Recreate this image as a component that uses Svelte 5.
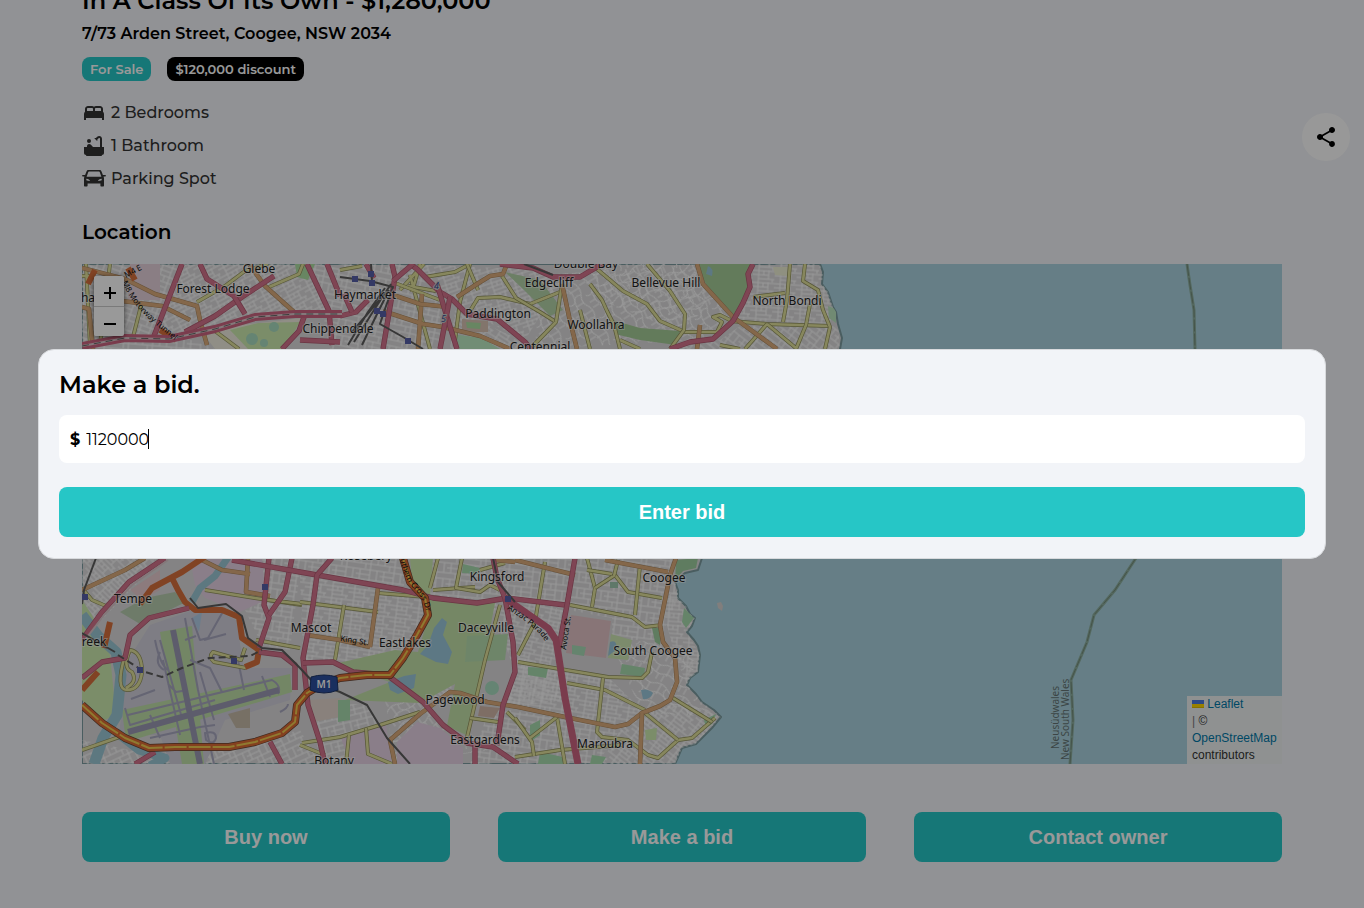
<script>
  import { onMount } from 'svelte';

  let bid = $state('1120000');
  let bidInput;

  onMount(() => bidInput.focus());

  const land =
    'M82 264H820L823 272 822 284 828 292 833 307 836 312 838 324 842 338 840 349 830 400 790 430 770 480 730 520 702 558 698 570 685 573 675 582 678 590 678 598 686 606 690 614 695 618 692 626 687 632 694 640 698 646 700 655 698 672 690 678 687 685 696 694 702 702 714 710 721 717 712 728 705 735 696 744 682 748 675 764H82Z';

  // Street grids: an area, the angle of its blocks and the pattern used
  const districts = [
    ['82,264 182,264 154,334 82,346', 20, 'blocks'],
    ['182,264 307,264 329,311 245,316 180,334 160,330', -28, 'tight'],
    ['82,349 125,338 180,336 215,349', 5, 'blocks'],
    ['310,264 410,264 440,300 440,349 330,349', 12, 'blocks'],
    ['410,264 540,270 560,284 525,340 467,312', -18, 'tight'],
    ['455,310 525,342 530,349 450,349', 33, 'tight'],
    ['540,275 700,264 705,290 735,320 700,340 535,349', 58, 'loose'],
    ['590,264 690,264 715,300 680,332 600,300', -24, 'loose'],
    ['753,264 820,264 833,307 830,326 735,322', 4, 'tight'],
    ['740,326 838,326 840,349 670,349 720,340', 38, 'blocks'],
    ['82,558 162,558 82,640', 45, 'tight'],
    ['230,558 404,558 404,590 300,572 290,650 262,645 245,610', 8, 'blocks'],
    ['300,575 425,598 428,615 395,672 303,660', 7, 'tight'],
    ['430,558 575,558 567,603 430,597', 6, 'blocks'],
    ['490,603 567,605 558,652 565,700 505,708 515,672', 12, 'tight'],
    ['575,558 675,558 678,598 660,640 612,640 612,618 568,610', 7, 'blocks'],
    ['518,657 608,677 645,713 622,727 500,705', 9, 'tight'],
    ['610,640 663,642 700,655 687,685 702,702 721,717 642,713', 30, 'loose'],
    ['490,707 622,727 597,764 470,764', 8, 'blocks'],
    ['622,727 680,700 721,717 676,764 600,764', 38, 'tight'],
    ['310,700 367,705 387,738 400,764 320,764', -14, 'blocks'],
    ['82,740 140,752 210,752 300,730 320,764 82,764', -25, 'blocks'],
    ['385,700 423,702 467,743 490,750 395,764', -36, 'loose'],
    ['440,680 453,680 450,695 430,707', 40, 'tight'],
    ['660,600 678,590 695,618 687,632 700,655 698,672 687,685 675,655', 4, 'tight']
  ];

  const areas = [
    ['#f0eddf', '205,336 240,325 302,318 285,349 215,349'],
    ['#cdebb0', '230,330 258,323 300,322 284,349 248,349'],
    ['#aedfa3', '295,264 315,264 308,280 297,277'],
    ['#e6d3dc', '130,264 160,264 160,300 128,300'],
    ['#b4d4a8', '505,272 540,280 563,310 550,316 524,290'],
    ['#bcecc4', '452,334 482,338 500,349 455,349'],
    ['#d9c3b5', '462,319 488,321 488,332 462,332'],
    ['#aedfa3', '466,322 481,323 480,329 467,328'],
    ['#a6cd98', '698,264 752,264 747,280 748,292 733,317 713,297 702,277'],
    ['#a6cd98', '612,320 640,328 680,331 676,345 640,340 615,334'],
    ['#eef0d5', '773,267 790,267 788,276 775,275'],
    ['#bce6c0', '828,306 836,309 836,323 829,318'],
    ['#e6d3e4', '190,558 262,558 266,600 240,612 205,598 195,585'],
    ['#e9cdd0', '130,590 160,570 160,590 142,600'],
    ['#cdebb0', '82,600 92,615 110,655 116,715 100,722 82,700'],
    ['#b8cdb0', '120,612 145,598 175,592 186,602 140,624'],
    ['#d2d0dc', '128,660 150,625 205,606 236,620 244,668 292,668 290,700 225,720 205,764 170,764 160,735 119,735'],
    ['#c0e0a8', '160,632 192,626 204,764 182,764'],
    ['#c0e0a8', '122,710 290,674 292,692 126,742'],
    ['#b3cfe8', '192,618 202,612 199,632'],
    ['#c7bba9', '228,714 250,708 250,728 236,728'],
    ['#e4d8cf', '310,700 340,698 344,716 314,722'],
    ['#cdebb0', '410,558 433,558 430,596 412,582'],
    ['#c4e2a8', '430,600 495,603 485,655 466,735 447,726 455,684 420,703 345,700 390,682 334,664 395,650 418,652 426,625'],
    ['#b8deb0', '467,636 508,634 505,660 465,662'],
    ['#e6d3e4', '397,742 417,722 440,728 463,748 463,764 397,764'],
    ['#e6d3e4', '340,735 386,725 392,764 350,764'],
    ['#d3b8a9', '480,706 500,708 494,718 478,716'],
    ['#a8ddb0', '338,700 350,700 350,720 338,722'],
    ['#a8ddb0', '463,564 480,568 478,574 462,573'],
    ['#e3c4c6', '571,615 611,621 606,658 566,653'],
    ['#a8dcb8', '572,645 586,647 584,656 572,654'],
    ['#cfe8b4', '611,634 632,640 628,660 608,658'],
    ['#a8ddb0', '528,667 548,668 546,678 528,675'],
    ['#a8ddb0', '622,664 645,668 644,677 620,674'],
    ['#9ecfa0', '652,628 661,628 660,645 655,642'],
    ['#a8ddb0', '530,725 540,720 540,735 530,742'],
    ['#cdebb0', '645,730 657,728 656,740 646,740'],
    ['#a8ddb0', '592,755 606,757 602,764 590,764'],
    ['#a8ddb0', '540,752 563,757 564,764 538,764'],
    ['#9ecfa0', '676,560 698,558 696,568 683,571 675,580'],
    ['#a8ddb0', '684,608 694,618 686,628 682,622'],
    ['#a8ddb0', '704,720 716,714 712,724 706,728'],
    ['#9fc8b0', '610,582 618,582 618,588 610,588']
  ];

  const lakes = [
    'M442 618L447 622 443 635 452 652 448 664 436 662 420 654 428 645 434 628Z',
    'M388 682L404 676 416 674 414 688 398 694 390 690Z',
    'M641 690Q648 688 653 693 650 700 643 699Z',
    'M708 266q6 2 4 10l-6-2Z',
    'M610 642q8-3 6 8l-8 6Z'
  ];

  const streams = [
    ['M82 615L98 636 116 652 121 675 117 715 103 738 94 764', 11],
    ['M116 732L139 750 165 758 150 766', 9],
    ['M192 602L200 588 215 576 229 556', 7]
  ];

  const yellow = [
    'M197 302L225 286 245 271 268 264', 'M142 302L132 341', 'M215 331L239 349', 'M269 287L299 274 303 264', 'M110 264L100 345', 'M82 276H94M86 264L90 345',
    'M340 270L362 266', 'M410 275L430 349M425 277L455 272 470 264M400 290L424 264M455 340L460 302 470 264M420 264L412 292M408 286L436 291',
    'M395 283L440 300M470 311L478 298 500 297 530 304 560 292', 'M467 264L478 290M502 276L516 298 540 312 556 322 530 349', 'M562 284L556 322',
    'M597 269L623 291 647 304 660 321 685 332 717 332 722 322 713 317 720 315 730 320', 'M647 264L670 291 685 314 684 330 670 349', 'M590 284L602 300 607 311 614 325 620 349',
    'M790 264L787 300 783 322', 'M730 321L767 324 830 326', 'M805 264L803 281 818 290 823 310 830 327 825 349', 'M767 324L797 349M767 324L745 349M810 304L806 325L796 349', 'M753 297L785 293M720 345L740 349',
    'M580 310L590 349M640 349L620 340',
    'M205 590L255 598 302 605M378 593L440 598', 'M268 600L302 604', 'M125 655Q115 690 127 690 140 690 142 672 142 652 130 650 122 668 132 672 138 682 126 688', 'M245 648L241 660 213 652Q208 657 214 662L246 668',
    'M256 640L300 648', 'M300 602L378 612', 'M344 605L335 660', 'M302 743L340 737 380 725 420 712', 'M349 735L346 764M366 728L368 754 392 764', 'M438 558L430 588M433 590L475 587',
    'M462 558L456 588 480 592 490 585 500 590M480 570L505 563', 'M500 605L485 660 466 742', 'M470 718L498 722M507 712L525 730', 'M545 562L535 622 518 655', 'M518 662L608 677 642 678 648 672 652 652', 'M570 605L632 617 645 627 662 625',
    'M587 558L595 588 592 607', 'M587 570L612 574M595 588L615 575 628 592 662 598', 'M640 565L635 615', 'M567 683L605 690 645 710', 'M603 678L597 732 602 737 628 740 648 755 658 758 678 740 692 738 715 718', 'M673 698L712 722', 'M645 713L678 740',
    'M515 757L560 750 622 745', 'M557 717L565 764', 'M515 718L532 742 534 756M530 738L557 717', 'M300 745L325 755M82 588L92 600 106 606M82 750L125 735', 'M618 560L614 576'
  ];

  const orange = [
    'M82 268L125 279 155 294 197 306 200 320 207 345', 'M249 264L265 286 294 312', 'M122 301L162 306 190 320', 'M82 307L89 309 93 349', 'M422 294L418 349M383 311L423 324 443 327 480 336 510 349', 'M390 294L420 304 448 307',
    'M457 297L477 284 490 276 503 274 507 264', 'M562 284L570 321 577 349', 'M697 264L703 284 733 317 777 349', 'M700 325L697 349', 'M82 590L125 570 145 558', 'M202 560L222 570 250 574M248 558L246 592 270 596', 'M378 588L370 647M307 635L340 640 370 647',
    'M395 764L390 740 420 714 450 692 460 693 487 702 518 707 565 717 615 727 628 724 642 713 660 706 670 700 677 682 675 658 663 642 660 625 670 575 676 558', 'M642 713L640 764', 'M515 560L575 575M605 560L668 572', 'M495 560L515 562'
  ];

  const pink = [
    'M182 264L154 336', 'M185 332L215 316 242 297 274 276', 'M200 264L207 279 234 296 245 314', 'M307 264L329 311 332 345', 'M327 264L340 296', 'M304 317L299 331 282 349M300 340L340 342',
    'M410 264L417 269 440 292 452 299 467 314 497 319 525 342 533 352', 'M392 264L395 277 383 349', 'M393 281L413 264M366 264L374 278', 'M437 284L447 317 457 349', 'M450 297L440 349', 'M340 316L356 312 368 300', 'M344 294L352 312',
    'M500 264L533 268 553 277 580 277 602 264', 'M753 264L748 274 750 287 743 303 733 321 713 339 690 342 670 349',
    'M82 678L102 662 125 658 130 635 149 618 189 608', 'M82 640L102 612 129 582 165 558', 'M259 652L282 655 295 665 295 690', 'M269 558L264 605 269 618 259 648', 'M269 615L285 592 292 558', 'M232 560L300 572 403 590 433 598 477 603 507 598 565 605',
    'M332 558L317 575 313 605 303 658 308 705 320 742 325 764', 'M303 663L333 662 353 672 387 675 423 702 443 725 467 743 493 747 518 764', 'M475 745L475 764', 'M493 558L497 578 505 598 513 642 515 672 503 705 497 745', 'M575 558L567 605 558 652', 'M270 742L282 764M155 752L135 764'
  ];

  const anzac = 'M505 598L515 605 548 628 556 640 558 652 565 698 578 764';
  const highway = 'M82 346L125 338 169 339 215 329 255 317 295 314 342 314';
  const m1 = 'M82 705L102 723 125 738 149 748 175 747 229 747 255 742 282 733 295 722 297 705 307 693 320 685 340 678 367 675 390 675 403 658 417 635 428 615 425 598 410 582 403 558';
  const ramps = 'M206 556L182 572 152 588 140 604M172 578L178 590 185 602 195 610 222 610 239 617 242 638 259 650 257 662 245 667M110 622L104 648M95 270L88 284M128 268L135 280M82 690L98 672M160 330L176 340';
  const rail = 'M340 277L370 281 393 287 386 306 380 324 403 337 423 349M371 264L372 282M82 633L115 652M96 558L84 590 82 604M190 598L198 608 226 604 242 616 248 638 262 648 282 650 300 668 313 682 340 692 367 705 387 738 410 764M493 558L498 582 515 602M524 264L553 275';
  const tunnel = 'M118 655L145 672 162 677 182 668 209 658 250 656 262 650';
  const runways = 'M173 630L200 764M128 732L279 690';
  const taxiways =
    'M185 618L198 690 214 764M128 715L272 680Q282 686 278 694M125 708L130 725 215 700M160 640L182 718M155 640Q160 665 168 670M163 660L180 735M168 684L176 692 188 690M200 672L214 720M192 618L200 640 208 638 225 608M204 640L226 634M222 692L210 668 190 660M150 738L200 727 215 725M150 715L160 738M131 699L155 690M185 640L196 636M205 733Q216 730 216 738 214 746 206 740ZM160 652q-6 12 4 18M238 660L244 690M262 676L270 697M280 712q8-4 8-8';

  const stations = [[355, 279], [371, 274], [372, 283], [377, 311], [383, 314], [408, 341], [85, 597], [265, 587], [140, 670], [234, 661], [508, 599]];

  const places = [
    ['Glebe', 259, 273], ['Forest Lodge', 213, 293], ['Haymarket', 365, 299], ['Chippendale', 338, 333], ['Edgecliff', 549, 287], ['Double Bay', 586, 268], ['Bellevue Hill', 666, 287],
    ['North Bondi', 787, 305], ['Paddington', 498, 318], ['Woollahra', 596, 329], ['Centennial', 540, 351], ['ha', 88, 302], ['Rosebery', 366, 560], ['Kingsford', 497, 581], ['Coogee', 664, 582],
    ['Tempe', 133, 603], ['Mascot', 311, 632], ['Eastlakes', 405, 647], ['Daceyville', 486, 632], ['South Coogee', 653, 655], ['reek', 94, 646], ['Pagewood', 455, 704],
    ['Eastgardens', 485, 744], ['Maroubra', 605, 748], ['Botany', 334, 765]
  ];
</script>

<svelte:head><title>In A Class Of Its Own</title></svelte:head>

<main class="listing">
  <h1>In A Class Of Its Own - $1,280,000</h1>
  <p class="address">7/73 Arden Street, Coogee, NSW 2034</p>
  <div class="tags">
    <span class="tag">For Sale</span>
    <span class="tag dark">$120,000 discount</span>
  </div>
  <ul class="features">
    <li>
      <svg viewBox="0 0 24 24" aria-hidden="true"><path d="M21 10.78V8c0-1.65-1.35-3-3-3h-4c-.77 0-1.47.3-2 .78-.53-.48-1.23-.78-2-.78H6C4.35 5 3 6.35 3 8v2.78c-.61.55-1 1.34-1 2.22v6h2v-2h16v2h2v-6c0-.88-.39-1.67-1-2.22zM14 7h4c.55 0 1 .45 1 1v2h-6V8c0-.55.45-1 1-1zM5 8c0-.55.45-1 1-1h4c.55 0 1 .45 1 1v2H5V8z" /></svg>
      2 Bedrooms
    </li>
    <li>
      <svg viewBox="0 0 24 24" aria-hidden="true"><circle cx="7" cy="7" r="2" /><path d="M20 13V4.83C20 3.27 18.73 2 17.17 2c-.75 0-1.47.3-2 .83l-1.25 1.25c-.16-.05-.33-.08-.51-.08-.4 0-.77.12-1.08.32l2.76 2.76c.2-.31.32-.68.32-1.08 0-.18-.03-.34-.07-.51l1.25-1.25A.828.828 0 0 1 18 4.83V13h-6.85c-.3-.21-.57-.45-.82-.72l-1.4-1.55c-.19-.21-.43-.38-.69-.5A2.251 2.251 0 0 0 5 12.25V13H2v6c0 1.1.9 2 2 2 0 .55.45 1 1 1h14c.55 0 1-.45 1-1 1.1 0 2-.9 2-2v-6h-2z" /></svg>
      1 Bathroom
    </li>
    <li>
      <svg viewBox="0 0 24 24" aria-hidden="true"><path fill-rule="evenodd" d="M6.5 3h11c.9 0 1.6.5 1.9 1.3L20.9 8H23c.6 0 1 .3 1 .8s-.4.8-1 .8h-1.400l.4 1.600V18.500c0 .6-.4 1-1 1h-1.600c-.6 0-1-.4-1-1V16.500H5.600v2c0 .6-.4 1-1 1H3c-.6 0-1-.4-1-1v-7.300l.4-1.600H1c-.6 0-1-.3-1-.8S.4 8 1 8h2.100l1.500-3.700C4.900 3.500 5.600 3 6.500 3zM7 4.600c-.4 0-.6.2-.7.5L4.600 9.800h14.800l-1.700-4.700c-.1-.3-.3-.5-.7-.5zM4.300 11.700v1.600c1 .5 2.200.8 3.700.8-.2-1.500-1.500-2.400-3.700-2.400zM19.700 11.700c-2.200 0-3.500.9-3.700 2.400 1.500 0 2.700-.3 3.700-.8z" /></svg>
      Parking Spot
    </li>
  </ul>
  <h2>Location</h2>

  <section class="map" aria-label="Map">
    <svg class="tiles" viewBox="82 264 1200 500" preserveAspectRatio="xMidYMid slice">
      <defs>
        <pattern id="blocks" width="24" height="16" patternUnits="userSpaceOnUse"><path d="M0 1H24M0 6H14M0 11H24M4 1V11M14 0V16M21 1V11M9 11V16" /></pattern>
        <pattern id="tight" width="22" height="12" patternUnits="userSpaceOnUse"><path d="M0 1H22M0 5H16M6 9H22M6 0V12M16 0V9M11 1V5M20 9V12" /></pattern>
        <pattern id="loose" width="26" height="20" patternUnits="userSpaceOnUse"><path d="M0 3Q7 0 13 4T26 3M0 13Q6 9 14 12T26 13M5 2V13M12 4Q9 9 14 12T15 20M20 5V13M3 13V20M23 13V20" /></pattern>
        {#each districts as [, angle, kind], i}
          <pattern id="grid{i}" href="#{kind}" patternTransform="rotate({angle})"></pattern>
        {/each}
        <path id="anzac" d="M507 609L524 620 540 634 556 656" />
        <path id="avoca" d="M566 650L572 608" />
        <path id="southern" d="M399 550Q401 576 415 590T427 630" />
        <path id="motorway" d="M122 282Q132 304 148 318T182 346" />
        <clipPath id="shore"><path d={land} /></clipPath>
      </defs>
      <rect x="82" y="264" width="1200" height="500" fill="#aad3df" />
      <path class="coast" d={land} />
      <g clip-path="url(#shore)">
        {#each districts as [points], i}<polygon {points} fill="url(#grid{i})" />{/each}
        {#each areas as [fill, points]}<polygon {points} {fill} />{/each}
        <g fill="#a8dcc0"><circle cx="274" cy="327" r="5" /><circle cx="252" cy="339" r="6" /><circle cx="492" cy="688" r="7" /><circle cx="264" cy="343" r="4" /></g>
        {#each lakes as d}<path {d} fill="#9cc8dc" />{/each}
        {#each streams as [d, w]}<path class="line" {d} stroke="#9cc8d6" stroke-width={w} />{/each}
        <path class="line" d={taxiways} stroke="#a9a8c0" stroke-width="2" />
        <path class="line" d={runways} stroke="#9c9ab4" stroke-width="6" />
        {#each yellow as d}<path class="line" {d} stroke="#90905c" stroke-width="4" /><path class="line" {d} stroke="#e2e29c" stroke-width="2.6" />{/each}
        {#each orange as d}<path class="line" {d} stroke="#a8845c" stroke-width="4.6" /><path class="line" {d} stroke="#dcac7c" stroke-width="3.6" />{/each}
        <path class="line" d={ramps} stroke="#d8703c" stroke-width="6" />
        {#each pink as d}<path class="line" {d} stroke="#b05870" stroke-width="5.4" /><path class="line" {d} stroke="#d4748c" stroke-width="4" />{/each}
        <path class="line" d={anzac} stroke="#cc6480" stroke-width="7" />
        <path class="line" d={highway} stroke="#cc6480" stroke-width="8" />
        <path class="line" d={highway} stroke="#dcc8cc" stroke-width="2" />
        <path class="line" d={highway} stroke="#666" stroke-width="1" stroke-dasharray="7 5" />
        <path class="line" d="M82 644L104 615 132 585 168 560" stroke="#dcc8cc" stroke-width="2" />
        <path class="line" d={rail} stroke="#5c5c5c" stroke-width="2" />
        <path class="line" d="M391 284L374 310 354 342M385 288L368 312 348 345M389 290L378 312 362 345M382 297L352 332" stroke="#5c5c5c" stroke-width="2" />
        <path class="line" d={tunnel} stroke="#5c5c5c" stroke-width="2" stroke-dasharray="7 4" />
        <path class="line" d={m1} stroke="#6a4434" stroke-width="8" />
        <path class="line" d={m1} stroke="#dc6c34" stroke-width="6.600" />
        <path class="line" d={m1} stroke="#eecb50" stroke-width="2" stroke-dasharray="22 2" />
        {#each stations as [x, y]}<rect x={x - 3} y={y - 3} width="6" height="6" fill="#5860a8" />{/each}
      </g>
      <path d="M717 603l4-1 2 4-1 5-4-3Z" fill="#d8d2d0" />
      <g class="border">
        <path d="M1187 264L1190 285 1194 310 1195 349 1190 420 1160 520 1136 558 1115 590 1094 615 1087 642 1071 680 1073 720 1070 764" stroke="#8cae9e" stroke-width="3" />
        <path d="M1187 264L1190 285 1194 310 1195 349 1190 420 1160 520 1136 558 1115 590 1094 615 1087 642 1071 680 1073 720 1070 764" stroke="#748c7c" stroke-width="1" stroke-dasharray="12 2" />
      </g>
      <g class="names">
        {#each places as [name, x, y]}<text {x} {y}>{name}</text>{/each}
      </g>
      <g class="road-names">
        <text><textPath href="#anzac">Anzac Parade</textPath></text>
        <text><textPath href="#avoca">Avoca St.</textPath></text>
        <text><textPath href="#southern">Southern Cross Dr</textPath></text>
        <text><textPath href="#motorway">M8 Motorway Tunnel</textPath></text>
        <text transform="translate(340 641) rotate(9)">King St.</text>
        <text transform="translate(126 278) rotate(-28)">M4 E</text>
      </g>
      <g class="stops"><text x="434" y="289">4</text><text x="441" y="322">5</text></g>
      <g class="state">
        <text transform="translate(1059 749) rotate(-90)">Neusüdwales</text>
        <text transform="translate(1069 760) rotate(-90)">New South Wales</text>
      </g>
      <path d="M311 677Q324 673 337 677L338 690Q324 696 310 690Z" fill="#2c4f9e" stroke="#1c3468" />
      <text class="shield" x="324" y="688">M1</text>
    </svg>
    <div class="zoom">
      <button type="button" aria-label="Zoom in"><svg viewBox="0 0 12 12" aria-hidden="true"><path d="M0 6H12M6 0V12" /></svg></button>
      <button type="button" aria-label="Zoom out"><svg viewBox="0 0 12 12" aria-hidden="true"><path d="M0 6H12" /></svg></button>
    </div>
    <div class="credit">
      <a href="#leaflet"><svg viewBox="0 0 12 8" aria-hidden="true"><path fill="#4c7be1" d="M0 0h12v4H0z" /><path fill="#ffd500" d="M0 4h12v3H0z" /><path fill="#e0bc00" d="M0 7h12v1H0z" /></svg> Leaflet</a><br />
      <span class="bar">|</span> © <a href="#osm">OpenStreetMap</a> contributors
    </div>
  </section>

  <div class="actions">
    <button type="button" class="primary">Buy now</button>
    <button type="button" class="primary">Make a bid</button>
    <button type="button" class="primary">Contact owner</button>
  </div>
</main>

<button type="button" class="share" aria-label="Share">
  <svg viewBox="0 0 24 24" aria-hidden="true"><path d="M18 16.080c-.76 0-1.440.3-1.960.77L8.910 12.700c.05-.23.09-.46.09-.7s-.04-.47-.09-.7l7.050-4.110c.54.5 1.250.81 2.040.81 1.660 0 3-1.340 3-3s-1.340-3-3-3-3 1.340-3 3c0 .24.04.47.09.7L8.040 9.810C7.500 9.310 6.790 9 6 9c-1.660 0-3 1.340-3 3s1.340 3 3 3c.79 0 1.500-.31 2.040-.81l7.120 4.160c-.05.21-.08.43-.08.65 0 1.610 1.310 2.920 2.920 2.920s2.920-1.310 2.920-2.920-1.310-2.920-2.920-2.920z" /></svg>
</button>

<div class="overlay">
  <form class="dialog" role="dialog" aria-labelledby="bid-title" onsubmit={(e) => e.preventDefault()}>
    <h2 id="bid-title"><label for="bid">Make a bid.</label></h2>
    <div class="field">
      <span class="currency" aria-hidden="true">$</span>
      <input id="bid" inputmode="numeric" autocomplete="off" bind:value={bid} bind:this={bidInput} />
      <span class="caret"></span>
    </div>
    <button type="submit" class="primary">Enter bid</button>
  </form>
</div>

<style>
  :global(body) {
    background: #f2f4f8;
    overflow: hidden;
  }
  .listing, .dialog {
    font-family: Montserrat, Inter, sans-serif;
    color: #000;
  }
  .listing {
    max-width: 1200px;
    margin: 0 auto;
    padding: 0 24px 48px;
  }
  h1, h2, p, ul { margin: 0; padding: 0; }
  h1 {
    margin-top: -14px;
    font-size: 24px;
    line-height: 30px;
    font-weight: 600;
  }
  .address {
    margin-top: 8px;
    font-size: 16px;
    line-height: 20px;
    font-weight: 600;
  }
  .tags {
    display: flex;
    gap: 16px;
    margin-top: 13px;
  }
  .tag {
    padding: 0 8px;
    border-radius: 8px;
    background: #26c6c6;
    color: #fff;
    font-size: 13px;
    line-height: 24px;
    font-weight: 600;
  }
  .dark { background: #000; }
  .features {
    display: grid;
    gap: 9px;
    margin-top: 20px;
    list-style: none;
  }
  .features li {
    display: flex;
    align-items: center;
    gap: 5px;
    color: #333;
    font-size: 16px;
    line-height: 24px;
    font-weight: 500;
  }
  .features svg { width: 24px; height: 24px; fill: #333; }
  h2 {
    margin-top: 29px;
    font-size: 20px;
    line-height: 24px;
    font-weight: 600;
  }
  .map {
    position: relative;
    height: 500px;
    margin-top: 20px;
    overflow: hidden;
  }
  .tiles { display: block; width: 100%; height: 100%; }
  .coast { fill: #dcdbdc; stroke: #7c9ca0; stroke-width: 2; stroke-linejoin: round; }
  .line { fill: none; stroke-linejoin: round; }
  pattern path { fill: none; stroke: #fff; stroke-width: 1; }
  .border path { fill: none; }
  .names text {
    font: 12px 'Noto Sans', sans-serif;
    text-anchor: middle;
    fill: #222;
    stroke: rgba(255, 255, 255, 0.5);
    stroke-width: 2px;
    paint-order: stroke;
  }
  .road-names text { font: 8px 'Noto Sans', sans-serif; fill: #111; }
  .stops text { font: italic 9px 'Noto Sans', sans-serif; fill: #33448c; stroke: #ccc; stroke-width: 2px; paint-order: stroke; }
  .state text { font: 10px 'Noto Sans', sans-serif; fill: #647474; }
  .shield { font: 600 10px 'Noto Sans', sans-serif; fill: #fff; text-anchor: middle; }
  .zoom {
    position: absolute;
    top: 12px;
    left: 12px;
    border-radius: 2px;
    box-shadow: 0 1px 5px rgba(0, 0, 0, 0.65);
    overflow: hidden;
  }
  .zoom button {
    display: grid;
    place-items: center;
    box-sizing: border-box;
    width: 30px;
    height: 30px;
    padding: 4px 0 0 1px;
    border: 0;
    background: #fff;
  }
  .zoom svg { width: 12px; height: 12px; fill: none; stroke: #000; stroke-width: 2; }
  .zoom button + button { border-top: 1px solid #ccc; }
  .credit {
    position: absolute;
    right: 0;
    bottom: 0;
    box-sizing: border-box;
    width: 95px;
    padding: 0 5px;
    background: #eef2f2;
    color: #333;
    font: 12px/17px 'Liberation Sans', sans-serif;
  }
  .credit a { color: #0078a8; text-decoration: none; }
  .credit svg { width: 12px; height: 8px; }
  .bar { color: #777; }
  .actions {
    display: grid;
    grid-template-columns: repeat(3, 1fr);
    gap: 48px;
    margin-top: 48px;
  }
  .primary {
    height: 50px;
    border: 0;
    border-radius: 8px;
    background: #26c6c6;
    color: #fff;
    font: bold 20px 'Liberation Sans', sans-serif;
  }
  .share {
    position: fixed;
    top: 113px;
    right: 14px;
    display: grid;
    place-items: center;
    width: 48px;
    height: 48px;
    padding: 0;
    border: 0;
    border-radius: 50%;
    background: #fefefe;
  }
  .share svg { width: 24px; height: 24px; }
  .overlay {
    position: fixed;
    inset: 0;
    display: grid;
    align-items: center;
    padding: 0 38px;
    background: rgba(0, 0, 0, 0.4);
  }
  .dialog {
    display: grid;
    padding: 20px 20px 21px;
    border: 1px solid #d8dadd;
    border-radius: 16px;
    background: #f2f4f8;
  }
  .dialog h2 {
    margin: 0;
    font-size: 24px;
    line-height: 30px;
  }
  .field {
    display: flex;
    align-items: center;
    height: 48px;
    margin: 15px 0 24px;
    padding: 0 11px;
    border-radius: 8px;
    background: #fff;
    font-size: 16px;
  }
  .currency { margin-right: 6px; font-weight: 700; }
  .field input {
    field-sizing: content;
    max-width: 90%;
    padding: 0;
    border: 0;
    outline: 0;
    background: none;
    color: #000;
    caret-color: transparent;
    font: inherit;
    font-weight: 400;
  }
  .caret { width: 1px; height: 20px; margin-left: -1px; background: #000; }
</style>
